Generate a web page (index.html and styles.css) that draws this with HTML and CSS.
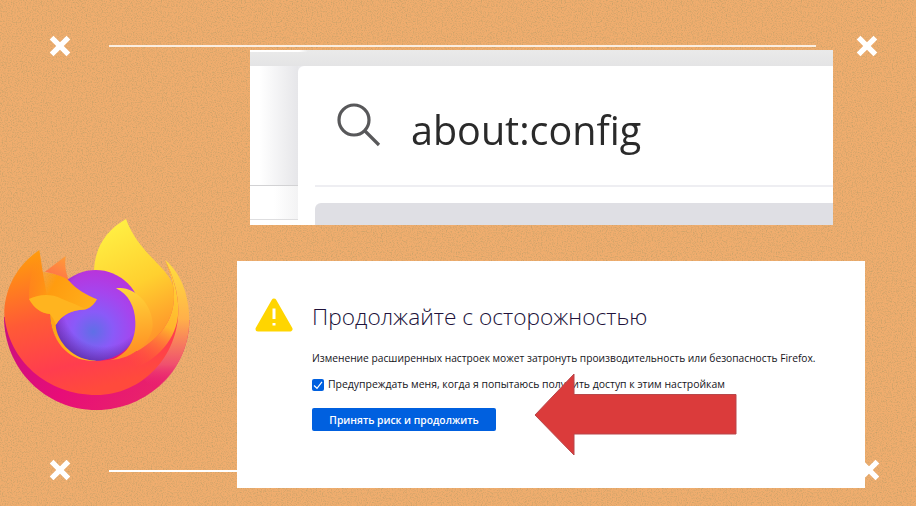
FILE: index.html
```html
<!DOCTYPE html>
<html>
  <head>
    <meta charset="utf-8" />
    <meta name="viewport" content="width=device-width, initial-scale=1" />
    <link rel="stylesheet" href="styles.css">
  </head>
  <body>
    <div class="slide">
      <svg class="cork" width="916" height="506">
        <filter id="grain">
          <feTurbulence type="fractalNoise" baseFrequency="0.8" numOctaves="2" seed="4" />
          <feColorMatrix type="matrix" values="0 0 0 0 0.6  0 0 0 0 0.36  0 0 0 0 0.14  0 0 0 2.4 -1.05" />
        </filter>
        <rect width="916" height="506" filter="url(#grain)" />
      </svg>

      <div class="line line-top"></div>
      <div class="line line-bottom"></div>

      <svg class="cross cross-tl" viewBox="0 0 20 20"><path d="M3 3L17 17M17 3L3 17" /></svg>
      <svg class="cross cross-tr" viewBox="0 0 20 20"><path d="M3 3L17 17M17 3L3 17" /></svg>
      <svg class="cross cross-bl" viewBox="0 0 20 20"><path d="M3 3L17 17M17 3L3 17" /></svg>
      <svg class="cross cross-br" viewBox="0 0 20 20"><path d="M3 3L17 17M17 3L3 17" /></svg>

      <svg class="logo" viewBox="0 0 720 660">
        <defs>
          <linearGradient id="bodyGrad" x1="0.25" y1="0" x2="0.55" y2="0.95">
            <stop offset="0" stop-color="#ff9a0e" />
            <stop offset="0.45" stop-color="#ff5a36" />
            <stop offset="0.8" stop-color="#ff3d4e" />
            <stop offset="1" stop-color="#ff4a3c" />
          </linearGradient>
          <linearGradient id="flameGrad" x1="0.3" y1="0" x2="0.6" y2="1">
            <stop offset="0" stop-color="#fff044" />
            <stop offset="0.5" stop-color="#ffd02f" />
            <stop offset="1" stop-color="#ff8a2a" />
          </linearGradient>
          <linearGradient id="rimGrad" x1="0.4" y1="0" x2="0.4" y2="1">
            <stop offset="0" stop-color="#ffe03c" />
            <stop offset="0.45" stop-color="#ffb04a" />
            <stop offset="0.8" stop-color="#f0506e" />
            <stop offset="1" stop-color="#e70d78" stop-opacity="0" />
          </linearGradient>
          <linearGradient id="bandGrad" x1="0.8" y1="0" x2="0.5" y2="1">
            <stop offset="0" stop-color="#ffd83a" />
            <stop offset="0.55" stop-color="#ffb52c" />
            <stop offset="1" stop-color="#ff5a30" stop-opacity="0" />
          </linearGradient>
          <linearGradient id="shadeGrad" x1="0" y1="0" x2="1" y2="0.3">
            <stop offset="0" stop-color="#c8107f" />
            <stop offset="0.5" stop-color="#e70d78" />
            <stop offset="1" stop-color="#e9246a" />
          </linearGradient>
          <radialGradient id="globeGrad" gradientUnits="userSpaceOnUse" cx="280" cy="395" r="200">
            <stop offset="0" stop-color="#5f6fe6" />
            <stop offset="0.3" stop-color="#8a5af8" />
            <stop offset="0.6" stop-color="#a545ee" />
            <stop offset="1" stop-color="#bd30d6" />
          </radialGradient>
          <radialGradient id="globeEdge" gradientUnits="userSpaceOnUse" cx="310" cy="320" r="175">
            <stop offset="0.68" stop-color="#3c1e82" stop-opacity="0" />
            <stop offset="1" stop-color="#3c1e82" stop-opacity="0.65" />
          </radialGradient>
          <linearGradient id="crescentGrad" x1="0.3" y1="0" x2="0.4" y2="1">
            <stop offset="0" stop-color="#ffd83a" />
            <stop offset="1" stop-color="#ff8b22" />
          </linearGradient>
          <linearGradient id="headGrad" x1="0" y1="0" x2="0.9" y2="0.8">
            <stop offset="0.1" stop-color="#ff980e" stop-opacity="0" />
            <stop offset="0.4" stop-color="#ff9c10" />
            <stop offset="1" stop-color="#ffb51e" />
          </linearGradient>
          <linearGradient id="earGrad" x1="0.8" y1="0" x2="0.3" y2="1">
            <stop offset="0" stop-color="#ff9c38" />
            <stop offset="1" stop-color="#ff6f4a" />
          </linearGradient>
        </defs>
        <path fill="url(#shadeGrad)" d="M12 350C12 505 135 630 290 630C445 630 568 505 568 360L300 400Z" />
        <path fill="url(#rimGrad)" d="M495 180C545 220 568 290 568 360C568 440 530 520 465 572L395 500C480 470 535 400 535 330C535 280 520 225 495 180Z" />
        <path fill="url(#flameGrad)" d="M378 57C320 90 285 140 282 212L420 470C500 405 528 340 522 270C512 200 420 170 378 57Z" />
        <path fill="url(#bodyGrad)" d="M118 150C50 195 12 270 13 345C25 480 140 585 290 585C425 585 535 470 535 330C535 280 518 225 495 180C510 215 522 250 522 290C522 350 490 400 440 435C395 470 340 482 290 482L150 340L128 215Z" />
        <path fill="url(#bandGrad)" d="M495 180C518 225 535 280 535 330C535 400 490 470 400 508C360 490 345 485 320 480C380 475 410 455 440 435C490 400 522 350 522 290C522 250 510 215 495 180Z" />
        <path fill="url(#earGrad)" d="M135 215L197 168C193 195 198 220 207 242C180 228 160 220 135 215Z" />
        <circle fill="url(#globeGrad)" cx="287" cy="346" r="136" />
        <circle fill="url(#globeEdge)" cx="287" cy="346" r="136" />
        <path fill="url(#crescentGrad)" d="M348 265C400 255 455 310 458 370C460 425 400 478 330 480C385 465 408 415 406 365C405 320 385 282 348 265Z" />
        <path fill="url(#headGrad)" d="M118 150L128 215C160 220 190 228 207 242C230 270 262 285 291 298C282 315 268 325 258 328C215 330 185 345 167 375C170 425 220 482 290 482C205 490 152 420 150 342C125 340 102 325 87 297C85 250 100 190 118 150Z" />
        <path fill="#ffb41f" d="M87 297C110 285 150 278 185 296C215 308 240 318 258 328C215 330 185 345 167 375C165 360 155 350 150 342C125 340 102 325 87 297Z" />
      </svg>

      <div class="shot shot-search">
        <div class="shot-strip"></div>
        <div class="shot-main">
          <div class="sidebar">
            <div class="sidebar-top"></div>
            <div class="sidebar-row"></div>
          </div>
          <div class="search-card">
            <div class="search-row">
              <svg class="search-icon" viewBox="0 0 44 44">
                <circle cx="17" cy="17" r="15" />
                <path d="M28 28L42 42" />
              </svg>
              <span class="search-text">about:config</span>
            </div>
            <div class="search-rule"></div>
            <div class="search-result"></div>
          </div>
        </div>
      </div>

      <div class="shot shot-warning">
        <div class="warning-head">
          <svg class="warning-icon" viewBox="0 0 38 36">
            <path class="warning-tri" d="M19 3L35 31H3Z" />
            <path class="warning-mark" d="M19 10.5V21M19 25V27.5" />
          </svg>
          <h1>Продолжайте с осторожностью</h1>
        </div>
        <div class="warning-body">
          <p>Изменение расширенных настроек может затронуть производительность или безопасность Firefox.</p>
          <label class="warning-check">
            <span class="checkbox">
              <svg viewBox="0 0 12 12"><path d="M2 6.5L5 9.3L10 2.8" /></svg>
            </span>
            Предупреждать меня, когда я попытаюсь получить доступ к этим настройкам
          </label>
          <button>Принять риск и продолжить</button>
        </div>
      </div>

      <svg class="arrow" viewBox="0 0 206 86">
        <path d="M1 42L40 1V21.5H202V61H40V82Z" />
      </svg>
    </div>
  </body>
</html>
```

FILE: styles.css
```css
body {
  margin: 0;
  font-family: "Open Sans", "Noto Sans", sans-serif;
}

.slide {
  position: relative;
  width: 916px;
  height: 506px;
  overflow: hidden;
  background-color: #f0ad6e;
}

.cork {
  position: absolute;
  left: 0;
  top: 0;
}

.line {
  position: absolute;
  left: 109px;
  height: 2px;
  background-color: #fbeee0;
}

.line-top {
  top: 45px;
  width: 707px;
}

.line-bottom {
  top: 470px;
  width: 130px;
  background-color: #fff;
}

.cross {
  position: absolute;
  width: 24px;
  height: 24px;
  fill: none;
  stroke: #fff;
  stroke-width: 4.4;
}

.cross-tl {
  left: 48px;
  top: 34px;
}

.cross-tr {
  left: 855px;
  top: 34px;
}

.cross-bl {
  left: 48px;
  top: 458px;
}

.cross-br {
  left: 857px;
  top: 458px;
}

.logo {
  position: absolute;
  left: 0;
  top: 200px;
  width: 240px;
  height: 220px;
}

.shot {
  position: absolute;
  background-color: #fff;
  overflow: hidden;
}

/* top screenshot, the address bar */
.shot-search {
  left: 250px;
  top: 50px;
  width: 583px;
  height: 175px;
  display: flex;
  flex-direction: column;
}

.shot-strip {
  height: 16px;
  flex-shrink: 0;
  background:
    linear-gradient(to right, #fff, #fff 85%, transparent) 0 0 / 58px 2px no-repeat,
    linear-gradient(to bottom, #eaeaea, #e4e4e5);
}

.shot-main {
  flex: 1;
  display: flex;
  background-color: #e9e9ec;
}

.sidebar {
  width: 48px;
  display: flex;
  flex-direction: column;
  background-color: #fff;
}

.sidebar-top {
  height: 119px;
  border-bottom: 1px solid #d2d2d4;
  background: linear-gradient(to right, #fff 20%, #e6e6e9);
}

.sidebar-row {
  height: 33px;
  border-bottom: 1px solid #dedee0;
  background: linear-gradient(to right, #fff 50%, #f3f3f4);
}

.search-card {
  flex: 1;
  padding-left: 17px;
  background-color: #fff;
  border-top-left-radius: 6px;
}

.search-row {
  height: 119px;
  display: flex;
  align-items: center;
  gap: 30px;
  padding-left: 22px;
  box-sizing: border-box;
}

.search-icon {
  width: 44px;
  height: 44px;
  margin-top: -2px;
  fill: none;
  stroke: #58585a;
  stroke-width: 3.2;
  filter: blur(0.4px);
}

.search-text {
  margin-top: 8px;
  font-size: 39.5px;
  color: #2a2a2a;
  filter: blur(0.6px);
}

.search-rule {
  height: 2px;
  background-color: #eeeef2;
}

.search-result {
  height: 22px;
  margin-top: 16px;
  background-color: #dfdfe4;
  border-top-left-radius: 6px;
}

/* bottom screenshot, the warning page */
.shot-warning {
  left: 237px;
  top: 261px;
  width: 628px;
  height: 227px;
  box-sizing: border-box;
  padding: 37px 0 0 18px;
  color: #15141a;
}

.warning-head {
  display: flex;
  align-items: center;
  gap: 19px;
}

.warning-icon {
  width: 38px;
  height: 36px;
  flex-shrink: 0;
}

.warning-tri {
  fill: #ffd500;
  stroke: #ffd500;
  stroke-width: 5;
  stroke-linejoin: round;
}

.warning-mark {
  fill: none;
  stroke: #fff;
  stroke-width: 3;
}

h1 {
  margin: 0;
  font-size: 22.7px;
  font-weight: 300;
  color: #20123a;
}

.warning-body {
  margin-left: 57px;
  display: flex;
  flex-direction: column;
  align-items: flex-start;
  line-height: 15px;
}

p {
  margin: 17px 0 0;
  font-size: 10.22px;
}

.warning-check {
  display: flex;
  align-items: center;
  gap: 4px;
  margin-top: 11px;
  font-size: 10.45px;
}

.checkbox {
  width: 12px;
  height: 12px;
  border-radius: 2px;
  background-color: #0060df;
  display: flex;
}

.checkbox path {
  fill: none;
  stroke: #fff;
  stroke-width: 1.2;
}

button {
  width: 184px;
  height: 23px;
  margin-top: 16px;
  padding: 0;
  border: 0;
  border-radius: 2px;
  background-color: #0060df;
  color: #fff;
  font-family: inherit;
  font-size: 10.3px;
  font-weight: 600;
}

.arrow {
  position: absolute;
  left: 534px;
  top: 373px;
  width: 206px;
  height: 86px;
  fill: #db3b3b;
  stroke: #b8474a;
  stroke-width: 1;
}
```
